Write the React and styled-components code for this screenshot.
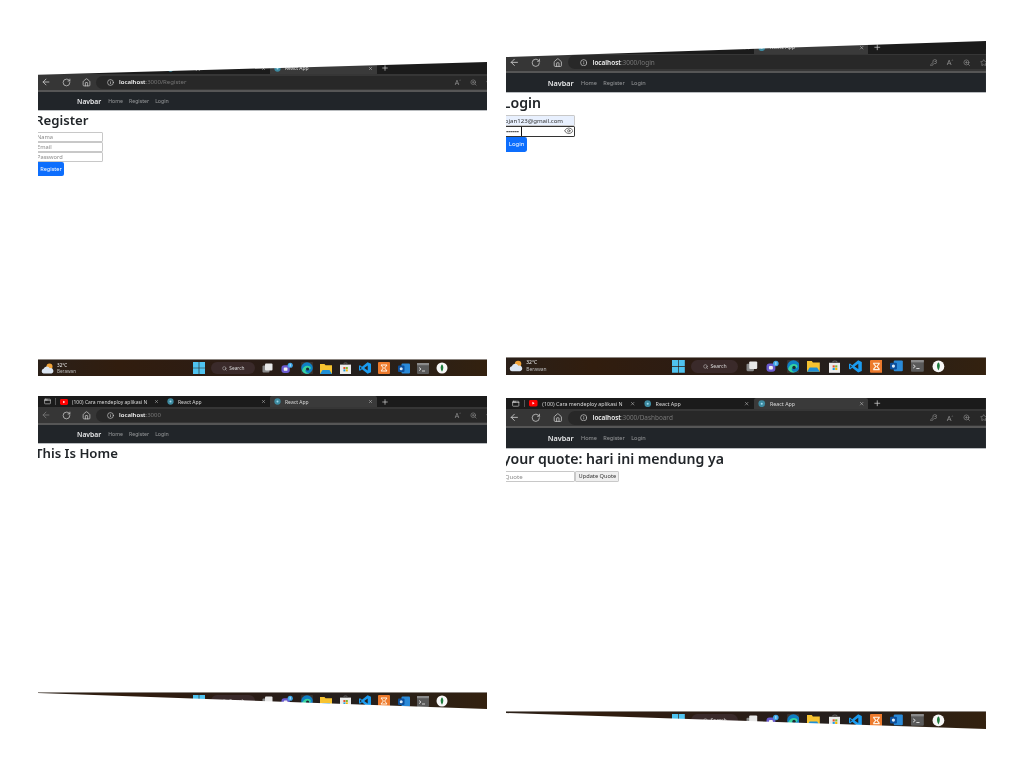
import React from "react";
import styled, { createGlobalStyle } from "styled-components";
import { ArrowLeft, RotateCw, Home, Info, Search, Eye, X, Plus, KeyRound, ZoomIn, Star, AppWindow } from "lucide-react";

const GlobalStyle = createGlobalStyle`
    html, body { margin: 0; padding: 0; background: #fff; }
    body { font-family: "Noto Sans", "Open Sans", Arial, sans-serif; }
    * { box-sizing: border-box; }
`;

const Page = styled.div`
    width: 1024px;
    height: 768px;
    overflow: hidden;
    display: flex;
    padding-left: 38px;
    gap: 19px;
`;

const Column = styled.div`
    display: flex;
    flex-direction: column;
    padding-top: ${(p) => p.$top}px;
    gap: ${(p) => p.$gap}px;
`;

// one pasted screenshot, skewed at the top or the bottom
const Shot = styled.section`
    width: 449px;
    height: ${(p) => p.$h}px;
    zoom: ${(p) => p.$zoom || 1};
    display: flex;
    flex-direction: column;
    overflow: hidden;
    background: #fff;
    clip-path: ${(p) => p.$clip};
    filter: blur(0.5px);
`;

const TabStrip = styled.div`
    height: ${(p) => p.$h}px;
    flex: none;
    background: #1b1b1b;
    display: flex;
    align-items: center;
    color: #d8d8d8;
    font-size: 5px;
    padding-left: 2px;
`;

const WindowBtn = styled.div`
    width: 16px;
    display: flex;
    justify-content: center;
    border-right: 1px solid #555;
`;

const Tab = styled.div`
    width: ${(p) => p.$w}px;
    height: 100%;
    display: flex;
    align-items: center;
    gap: 4px;
    padding: 0 4px;
    background: ${(p) => (p.$active ? "#3a3a3a" : "transparent")};
    border-radius: 2px 2px 0 0;
    white-space: nowrap;
    & > span {
        flex: 1;
        overflow: hidden;
    }
`;

const AddressRow = styled.div`
    height: 16px;
    flex: none;
    background: #363636;
    display: flex;
    align-items: center;
    color: #c8c8c8;
`;

const NavIcon = styled.div`
    width: 20px;
    flex: none;
    display: flex;
    justify-content: center;
    opacity: ${(p) => (p.$dim ? 0.45 : 1)};
    &:first-child {
        margin-left: -2px;
    }
`;

const AddressPill = styled.div`
    flex: 1;
    min-width: 0;
    height: 13px;
    border-radius: 7px 0 0 7px;
    background: #282828;
    display: flex;
    align-items: center;
    padding-left: 11px;
    gap: 5px;
    font-size: 6px;
    color: #777;
    & b {
        color: #f2f2f2;
        font-weight: 600;
    }
`;

const UrlTools = styled.div`
    margin-left: auto;
    margin-right: ${(p) => p.$end}px;
    display: flex;
    gap: 9px;
    align-items: center;
    color: #8f8f8f;
    font-size: 7px;
    flex: none;
`;

const Divider = styled.div`
    height: 2px;
    flex: none;
    background: #565656;
`;

const Navbar = styled.nav`
    height: 19px;
    flex: none;
    background: #212529;
    display: flex;
    align-items: center;
    padding-left: 39px;
    gap: 6px;
    font-size: 5.2px;
    color: rgba(255, 255, 255, 0.5);
    border-bottom: 1px solid #b9bcbf;
`;

const Brand = styled.span`
    color: #e6e7e8;
    font-size: 6.8px;
    font-weight: 600;
    margin-right: 1px;
`;

const Content = styled.main`
    flex: 1;
    margin-left: -3px;
    display: flex;
    flex-direction: column;
    align-items: flex-start;
    min-height: 0;
`;

const Heading = styled.h1`
    margin: 0 0 2.5px;
    font-size: 13.2px;
    line-height: 18px;
    font-weight: 600;
    color: #212529;
    white-space: nowrap;
`;

const Field = styled.input`
    display: block;
    width: ${(p) => p.$w || 68}px;
    height: 10px;
    padding: 0 1px;
    border: 1px solid #c8c8c8;
    border-radius: 1px;
    font: 5.7px "Noto Sans", sans-serif;
    background: ${(p) => (p.$filled ? "#e8f0fe" : "#fff")};
    color: #333;
    outline: none;
    &::placeholder {
        color: #8a8a8a;
    }
`;

const PasswordWrap = styled.div`
    position: relative;
    width: 68px;
`;

const PasswordField = styled(Field)`
    border: 1px solid #333;
    letter-spacing: -0.3px;
    color: #111;
`;

const Caret = styled.i`
    position: absolute;
    left: 17px;
    top: 1px;
    width: 1px;
    height: 8px;
    background: #111;
`;

const EyeMark = styled.div`
    position: absolute;
    right: 2px;
    top: 0.5px;
    color: #555;
    display: flex;
`;

const PrimaryButton = styled.button`
    display: block;
    height: 14px;
    width: ${(p) => p.$w}px;
    padding: 0 0 0 3px;
    border: 0;
    border-radius: 2px;
    background: #0d6efd;
    color: #fff;
    font: 5.6px "Noto Sans", sans-serif;
`;

const QuoteRow = styled.div`
    display: flex;
    align-items: center;
`;

const PlainButton = styled.button`
    height: 11px;
    padding: 0 2px;
    border: 1px solid #c9c9c9;
    border-radius: 1px;
    background: #efefef;
    color: #333;
    font: 5.3px "Noto Sans", sans-serif;
    white-space: nowrap;
`;

const Taskbar = styled.footer`
    height: 17px;
    flex: none;
    display: flex;
    align-items: center;
    padding-left: 3px;
    color: #eee;
    background: linear-gradient(90deg, #2a2019 0%, #311d0e 18%, #2b1c15 45%, #241f1d 70%, #33210f 100%);
    border-top: 1px solid #8b8580;
`;

const Weather = styled.div`
    width: 152px;
    flex: none;
    display: flex;
    align-items: center;
    gap: 3px;
    font-size: 4.6px;
    line-height: 6.5px;
    & small {
        display: block;
        font-size: 4.6px;
        color: #bdbdbd;
    }
`;

const TaskIcons = styled.div`
    display: flex;
    align-items: center;
    gap: 7.4px;
`;

const SearchPill = styled.div`
    width: 44px;
    height: 12px;
    margin: 0 -1px 0 -1px;
    border-radius: 6px;
    background: #3a2a2a;
    display: flex;
    align-items: center;
    justify-content: center;
    gap: 2px;
    font-size: 4.8px;
    color: #d8d8d8;
`;

const IconSlot = styled.div`
    width: 12px;
    height: 12px;
    display: flex;
    align-items: center;
    justify-content: center;
    position: relative;
    border-radius: 1px;
    background: ${(p) => (p.$on ? "rgba(255,255,255,0.09)" : "none")};
`;

const ReactDot = () => (
    <svg width="7" height="7" viewBox="0 0 10 10" style={{ flex: "none" }}>
        <circle cx="5" cy="5" r="4.5" fill="#3d8aa0" />
        <circle cx="5" cy="5" r="1.4" fill="#9fdcef" />
    </svg>
);

const YoutubeMark = () => (
    <svg width="8" height="6" viewBox="0 0 8 6" style={{ flex: "none" }}>
        <rect width="8" height="6" rx="1.4" fill="#f00" />
        <path d="M3.2 1.7 5.2 3 3.2 4.3z" fill="#fff" />
    </svg>
);

const WindowsLogo = () => (
    <svg width="12" height="12" viewBox="0 0 12 12">
        <path d="M0 0h5.7v5.7H0zM6.3 0H12v5.7H6.3zM0 6.3h5.7V12H0zM6.3 6.3H12V12H6.3z" fill="#4fc3f0" />
    </svg>
);

const CloudSun = () => (
    <svg width="13" height="11" viewBox="0 0 13 11">
        <circle cx="8.5" cy="3.6" r="3" fill="#f2a43a" />
        <path d="M2.6 10.5a2.4 2.4 0 0 1 0-4.7 3.4 3.4 0 0 1 6.2-.5 2.7 2.7 0 0 1 1.6 5.2z" fill="#dce6f2" />
    </svg>
);

const TaskView = () => (
    <svg width="11" height="10" viewBox="0 0 11 10">
        <rect x="0.5" y="2.5" width="7" height="7" rx="1" fill="#8a8a8a" />
        <rect x="3" y="0.5" width="7.5" height="7" rx="1" fill="#e8e8e8" />
    </svg>
);

const Teams = () => (
    <svg width="13" height="12" viewBox="0 0 13 12">
        <rect x="0.5" y="3" width="9" height="8.5" rx="3" fill="#6b5bd0" />
        <rect x="3" y="5.5" width="4" height="3.6" rx="1" fill="#f2f2f2" />
        <circle cx="10" cy="3" r="2.8" fill="#3fa7e8" />
        <path d="M10 1.5v3" stroke="#fff" strokeWidth=".7" />
    </svg>
);

const Edge = () => (
    <svg width="12" height="12" viewBox="0 0 12 12">
        <circle cx="6" cy="6" r="5.8" fill="#0f7fc4" />
        <path d="M1 8.5C2 4 6.5 2.5 9 4.5 10.5 5.8 10 7.5 8 7.5 6 7.5 4.6 7 4.4 8.6 4.2 10.5 7 11.8 9.6 10.4 6 13 2 11.5 1 8.5z" fill="#37d4a0" />
        <circle cx="6.6" cy="7" r="1.6" fill="#1a2a33" />
    </svg>
);

const Explorer = () => (
    <svg width="12" height="11" viewBox="0 0 12 11">
        <path d="M0 1h4.5l1 1.3H12V11H0z" fill="#f7c331" />
        <path d="M2.5 7h7l2.5 4H0z" fill="#1f8fd6" />
    </svg>
);

const Store = () => (
    <svg width="11" height="12" viewBox="0 0 11 12">
        <path d="M0 2.6h11V12H0z" fill="#ececec" />
        <path d="M3.4 2.6C3.4.4 7.6.4 7.6 2.6" stroke="#666" fill="none" />
        <path d="M3.4 5h2v2h-2z" fill="#e8512d" />
        <path d="M5.8 5h2v2h-2z" fill="#7cb82f" />
        <path d="M3.4 7.4h2v2h-2z" fill="#1d9ee0" />
        <path d="M5.8 7.4h2v2h-2z" fill="#f7b900" />
    </svg>
);

const VsCode = () => (
    <svg width="12" height="12" viewBox="0 0 12 12">
        <path d="M8.6.3 12 1.8v8.4l-3.4 1.5L3 7.2 1 8.8 0 8.2V3.8l1-.6 2 1.6zM8.7 3.6 5.2 6l3.5 2.4zM1.2 4.5v3L2.7 6z" fill="#1b9cf0" />
    </svg>
);

const Xampp = () => (
    <svg width="12" height="12" viewBox="0 0 12 12">
        <rect width="12" height="12" rx="1" fill="#ed7a2c" />
        <path d="M3 3l2.4 3L3 9M9 3 6.6 6 9 9M3 3h6M3 9h6" stroke="#fff3e6" strokeWidth="1" fill="none" />
    </svg>
);

const Outlook = () => (
    <svg width="12" height="11" viewBox="0 0 12 11">
        <rect x="3.5" y="0.5" width="8.5" height="10" rx="1" fill="#2a8ad8" />
        <rect x="0" y="2.5" width="6.5" height="6.5" rx="1" fill="#0c4f9c" />
        <circle cx="3.2" cy="5.7" r="1.5" fill="#dcecf9" />
    </svg>
);

const Terminal = () => (
    <svg width="12" height="11" viewBox="0 0 12 11">
        <rect width="12" height="11" rx="1" fill="#5a5a5a" />
        <rect width="12" height="2.2" fill="#8a8a8a" />
        <path d="M2 4.5 4 6 2 7.6M5 8h3" stroke="#eee" strokeWidth=".8" fill="none" />
    </svg>
);

const PinnedApp = () => (
    <svg width="12" height="12" viewBox="0 0 12 12">
        <circle cx="6" cy="6" r="5.5" fill="#f7f7f7" />
        <path d="M6 2.2c1.8 1.6 1.8 4.8 0 7.6-1.8-2.8-1.8-6 0-7.6z" fill="#1e7b3c" />
    </svg>
);

function Browser({ tools, url, tabHeight }) {
    return (
        <>
            <TabStrip $h={tabHeight}>
                <WindowBtn><AppWindow size={7} /></WindowBtn>
                <Tab $w={107}>
                    <YoutubeMark />
                    <span>(100) Cara mendeploy aplikasi N</span>
                    <X size={5} />
                </Tab>
                <Tab $w={107}>
                    <ReactDot />
                    <span>React App</span>
                    <X size={5} />
                </Tab>
                <Tab $w={107} $active>
                    <ReactDot />
                    <span>React App</span>
                    <X size={5} />
                </Tab>
                <Plus size={8} style={{ marginLeft: 4 }} />
            </TabStrip>
            <AddressRow>
                <NavIcon $dim={!url}><ArrowLeft size={10} /></NavIcon>
                <NavIcon><RotateCw size={9} /></NavIcon>
                <NavIcon><Home size={9} /></NavIcon>
                <AddressPill>
                    <Info size={7} color="#ddd" />
                    <span><b>localhost</b>:3000{url}</span>
                    <UrlTools $end={tools ? -1.5 : -6}>
                        {tools && <KeyRound size={7} />}
                        <span>A<sup style={{ fontSize: 3 }}>^</sup></span>
                        <ZoomIn size={7} />
                        <Star size={7} />
                    </UrlTools>
                </AddressPill>
            </AddressRow>
            <Divider />
            <Navbar>
                <Brand>Navbar</Brand>
                <span>Home</span>
                <span>Register</span>
                <span>Login</span>
            </Navbar>
        </>
    );
}

function WinTaskbar() {
    return (
        <Taskbar>
            <Weather>
                <CloudSun />
                <div>32°C<small>Berawan</small></div>
            </Weather>
            <TaskIcons>
                <IconSlot><WindowsLogo /></IconSlot>
                <SearchPill><Search size={5} />Search</SearchPill>
                <IconSlot><TaskView /></IconSlot>
                <IconSlot><Teams /></IconSlot>
                <IconSlot $on><Edge /></IconSlot>
                <IconSlot><Explorer /></IconSlot>
                <IconSlot><Store /></IconSlot>
                <IconSlot><VsCode /></IconSlot>
                <IconSlot><Xampp /></IconSlot>
                <IconSlot><Outlook /></IconSlot>
                <IconSlot><Terminal /></IconSlot>
                <IconSlot><PinnedApp /></IconSlot>
            </TaskIcons>
        </Taskbar>
    );
}

export default function App() {
    return (
        <Page>
            <GlobalStyle />
            <Column $top={62} $gap={20}>
                <Shot $h={314} $clip="polygon(0 4.1%, 100% 0, 100% 100%, 0 100%)">
                    <Browser url="/Register" tabHeight={12} />
                    <Content>
                        <Heading>Register</Heading>
                        <Field placeholder="Nama" />
                        <Field placeholder="Email" />
                        <Field placeholder="Password" />
                        <PrimaryButton $w={29}>Register</PrimaryButton>
                    </Content>
                    <WinTaskbar />
                </Shot>
                <Shot $h={313} $clip="polygon(0 0, 100% 0, 100% 100%, 0 94.9%)">
                    <Browser url="" tabHeight={11} />
                    <Content>
                        <Heading>This Is Home</Heading>
                    </Content>
                    <WinTaskbar />
                </Shot>
            </Column>
            <Column $top={41} $gap={23}>
                <Shot $h={312.4} $zoom={1.069} $clip="polygon(0 4.8%, 100% 0, 100% 100%, 0 100%)">
                    <Browser url="/login" tools tabHeight={12} />
                    <Content>
                        <Heading>Login</Heading>
                        <Field $filled defaultValue="ojan123@gmail.com" />
                        <PasswordWrap>
                            <PasswordField type="password" defaultValue="ojan123" />
                            <Caret />
                            <EyeMark><Eye size={9} /></EyeMark>
                        </PasswordWrap>
                        <PrimaryButton $w={23}>Login</PrimaryButton>
                    </Content>
                    <WinTaskbar />
                </Shot>
                <Shot $h={309.6} $zoom={1.069} $clip="polygon(0 0, 100% 0, 100% 100%, 0 95.2%)">
                    <Browser url="/Dashboard" tools tabHeight={10.5} />
                    <Content>
                        <Heading>your quote: hari ini mendung ya</Heading>
                        <QuoteRow>
                            <Field placeholder="Quote" />
                            <PlainButton>Update Quote</PlainButton>
                        </QuoteRow>
                    </Content>
                    <WinTaskbar />
                </Shot>
            </Column>
        </Page>
    );
}
